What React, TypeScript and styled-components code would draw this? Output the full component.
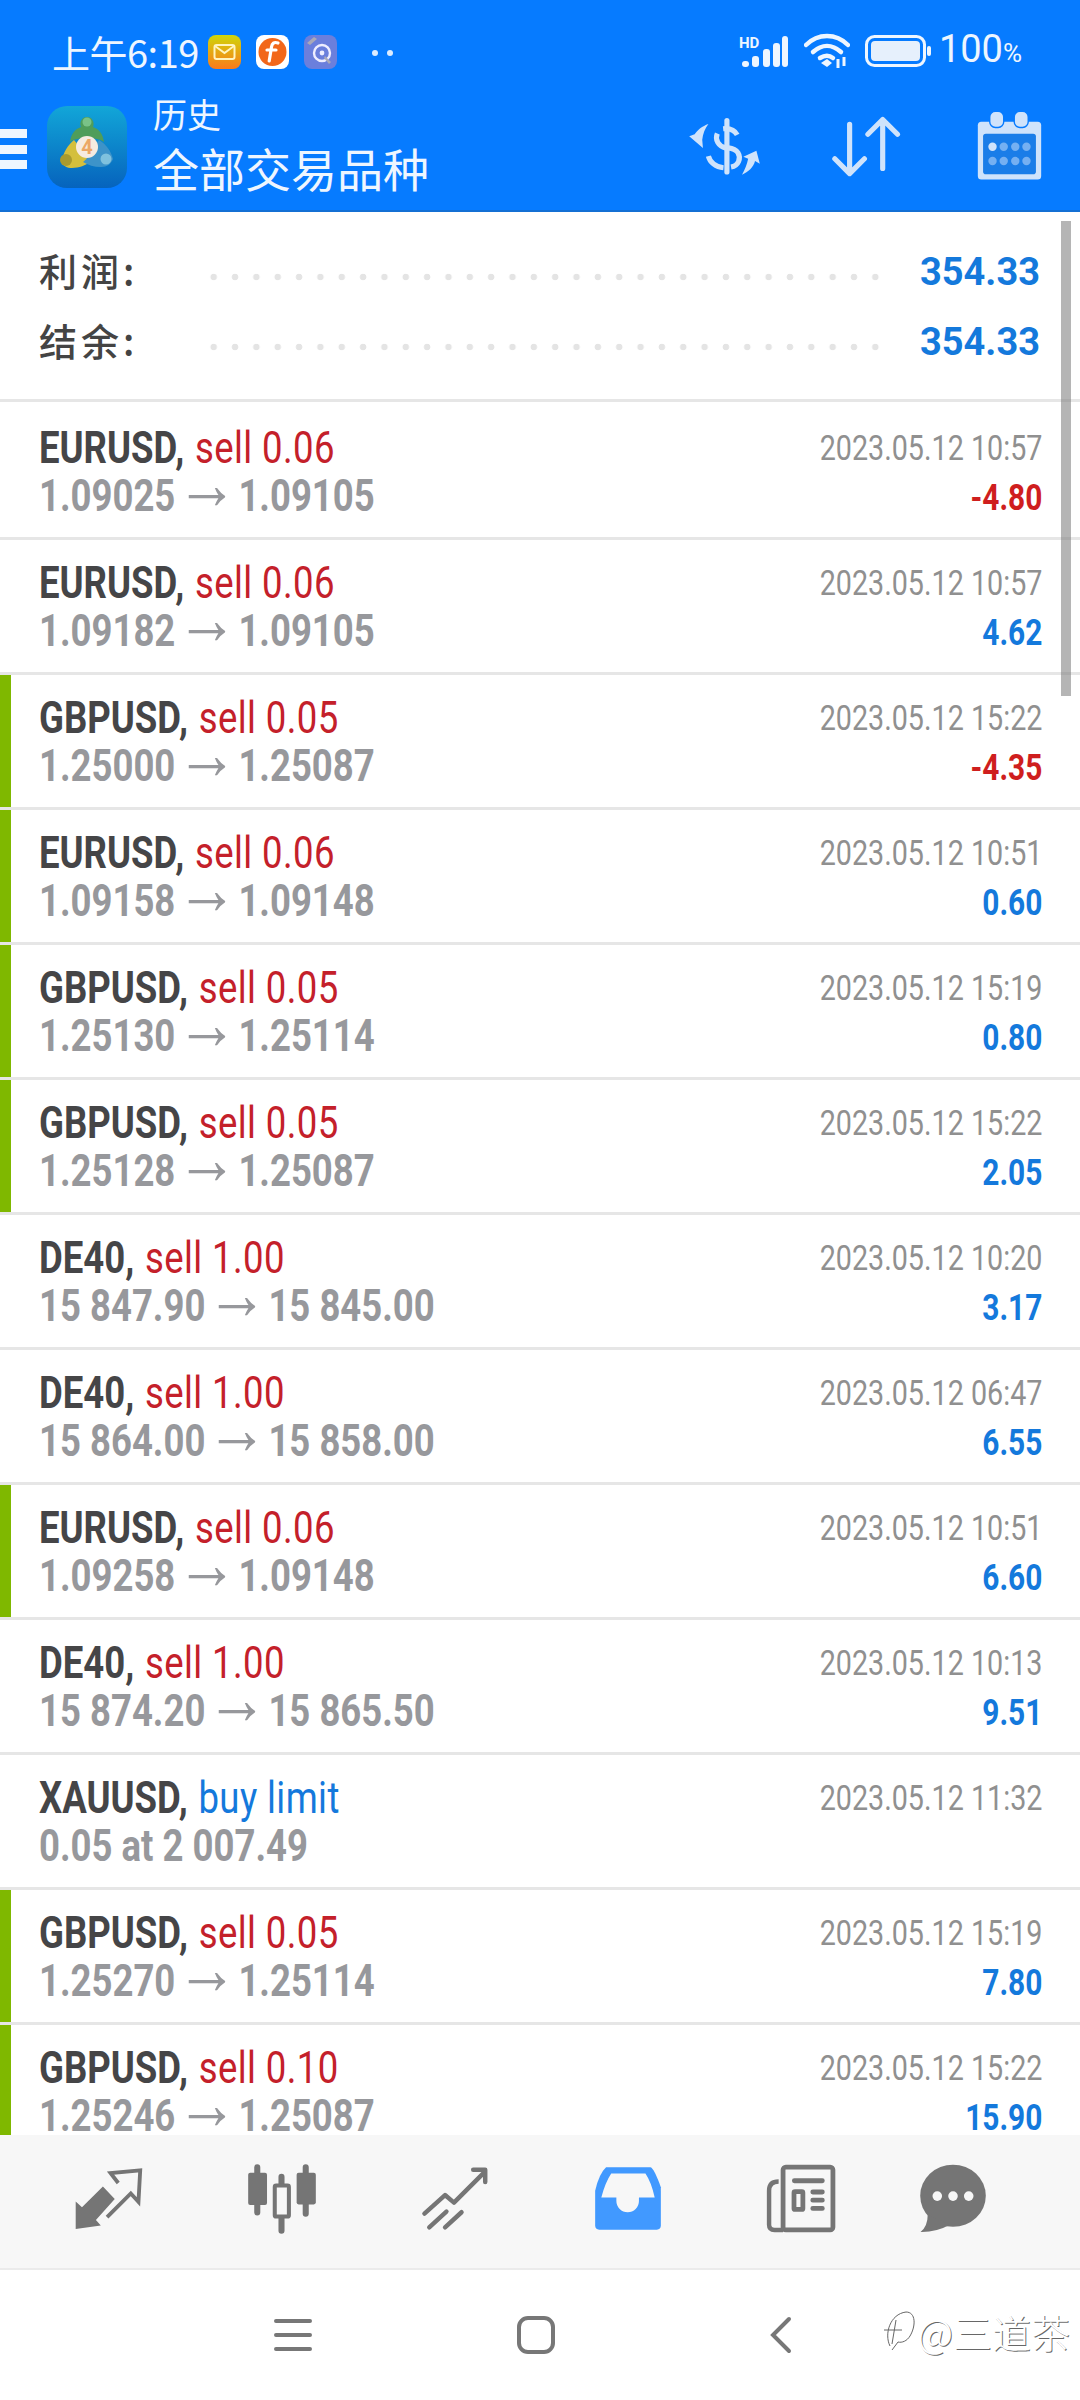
import React from 'react';
import styled, { createGlobalStyle } from 'styled-components';

interface Trade {
  symbol: string;
  side: string;
  open?: string;
  close?: string;
  note?: string;
  time: string;
  profit?: string;
  marked?: boolean;
  pending?: boolean;
}

const trades: Trade[] = [
  { symbol: 'EURUSD', side: 'sell 0.06', open: '1.09025', close: '1.09105', time: '2023.05.12 10:57', profit: '-4.80' },
  { symbol: 'EURUSD', side: 'sell 0.06', open: '1.09182', close: '1.09105', time: '2023.05.12 10:57', profit: '4.62' },
  { symbol: 'GBPUSD', side: 'sell 0.05', open: '1.25000', close: '1.25087', time: '2023.05.12 15:22', profit: '-4.35', marked: true },
  { symbol: 'EURUSD', side: 'sell 0.06', open: '1.09158', close: '1.09148', time: '2023.05.12 10:51', profit: '0.60', marked: true },
  { symbol: 'GBPUSD', side: 'sell 0.05', open: '1.25130', close: '1.25114', time: '2023.05.12 15:19', profit: '0.80', marked: true },
  { symbol: 'GBPUSD', side: 'sell 0.05', open: '1.25128', close: '1.25087', time: '2023.05.12 15:22', profit: '2.05', marked: true },
  { symbol: 'DE40', side: 'sell 1.00', open: '15 847.90', close: '15 845.00', time: '2023.05.12 10:20', profit: '3.17' },
  { symbol: 'DE40', side: 'sell 1.00', open: '15 864.00', close: '15 858.00', time: '2023.05.12 06:47', profit: '6.55' },
  { symbol: 'EURUSD', side: 'sell 0.06', open: '1.09258', close: '1.09148', time: '2023.05.12 10:51', profit: '6.60', marked: true },
  { symbol: 'DE40', side: 'sell 1.00', open: '15 874.20', close: '15 865.50', time: '2023.05.12 10:13', profit: '9.51' },
  { symbol: 'XAUUSD', side: 'buy limit', note: '0.05 at 2 007.49', time: '2023.05.12 11:32', pending: true },
  { symbol: 'GBPUSD', side: 'sell 0.05', open: '1.25270', close: '1.25114', time: '2023.05.12 15:19', profit: '7.80', marked: true },
  { symbol: 'GBPUSD', side: 'sell 0.10', open: '1.25246', close: '1.25087', time: '2023.05.12 15:22', profit: '15.90', marked: true },
];

const GlobalStyle = createGlobalStyle`
  html, body {
    margin: 0;
    padding: 0;
    background: #fff;
  }
  * {
    box-sizing: border-box;
  }
`;

const Page = styled.div`
  position: relative;
  width: 1080px;
  height: 2400px;
  display: flex;
  flex-direction: column;
  overflow: hidden;
  background: #fff;
  font-family: Roboto, 'Noto Sans CJK SC', sans-serif;
`;

const Header = styled.header`
  height: 212px;
  background: #067bff;
  border-bottom: 2px solid #1470d4;
  color: #eef6ff;
  flex: none;
`;

const StatusBar = styled.div`
  height: 92px;
  display: flex;
  align-items: flex-start;
  padding: 33px 58px 0 52px;
`;

const Clock = styled.span`
  font-size: 38px;
  line-height: 38px;
  width: 156px;
  white-space: nowrap;
  font-family: 'Noto Sans CJK SC', sans-serif;
  letter-spacing: -0.5px;
`;

const NoticeIcons = styled.div`
  display: flex;
  gap: 15px;
  margin-top: 2px;
`;

const MoreDots = styled.span`
  display: flex;
  gap: 9px;
  margin: 17px 0 0 35px;
  i {
    width: 6px;
    height: 6px;
    border-radius: 50%;
    background: #dcecff;
  }
`;

const StatusRight = styled.div`
  margin-left: auto;
  display: flex;
  align-items: center;
  height: 36px;
  gap: 15px;
`;

const Percent = styled.span`
  font-size: 38px;
  line-height: 36px;
  margin-left: -7px;
  small {
    font-size: 26px;
  }
`;

const Toolbar = styled.div`
  display: flex;
  align-items: center;
  height: 118px;
  position: relative;
`;

const Burger = styled.div`
  width: 27px;
  height: 40px;
  margin-top: -4px;
  display: flex;
  flex-direction: column;
  justify-content: space-between;
  i {
    height: 9px;
    background: #eef6ff;
  }
`;

const TitleBlock = styled.div`
  margin-left: 26px;
  margin-top: -11px;
  font-family: 'Noto Sans CJK SC', sans-serif;
`;

const Subtitle = styled.div`
  font-size: 34px;
  line-height: 40px;
`;

const Title = styled.div`
  font-size: 46px;
  line-height: 60px;
  margin-top: 3px;
`;

const ToolIcons = styled.div`
  margin-left: auto;
  display: grid;
  grid-template-columns: 145px 145px 65px;
  align-items: center;
  margin-right: 38px;
  margin-top: -10px;
`;

const Summary = styled.section`
  height: 190px;
  flex: none;
  padding: 25px 40px 0 39px;
  border-bottom: 3px solid #e6e6e6;
`;

const SummaryRow = styled.div`
  height: 70px;
  display: flex;
  align-items: center;
`;

const SummaryLabel = styled.span`
  width: 167px;
  margin-top: -6px;
  font-size: 38px;
  font-weight: 500;
  letter-spacing: 4px;
  color: #444;
  font-family: 'Noto Sans CJK SC', sans-serif;
`;

const Dots = styled.span`
  flex: 1;
  align-self: stretch;
  margin-right: 40px;
  background-image: radial-gradient(circle, #e4e4e4 3px, transparent 3.6px);
  background-size: 21.35px 8px;
  background-repeat: repeat-x;
  background-position: -3px 36px;
`;

const SummaryValue = styled.span`
  font-size: 38px;
  font-weight: 700;
  color: #1479dc;
`;

const List = styled.div`
  height: 1733px;
  flex: none;
  overflow: hidden;
`;

const Row = styled.div<{ $marked?: boolean }>`
  height: 135px;
  display: grid;
  grid-template-columns: 1fr auto;
  padding: 19px 38px 0 39px;
  border-bottom: 3px solid #e6e6e6;
  box-shadow: ${({ $marked }) => ($marked ? 'inset 11px 0 0 #7fb800' : 'none')};
  &:first-child {
    height: 138px;
    padding-top: 22px;
  }
`;

const Squeeze = styled.div<{ $right?: boolean }>`
  height: 48px;
  line-height: 48px;
  font-size: 44px;
  white-space: nowrap;
  transform: scaleX(0.83);
  transform-origin: ${({ $right }) => ($right ? 'right' : 'left')} center;
  text-align: ${({ $right }) => ($right ? 'right' : 'left')};
`;

const Symbol = styled.span`
  font-weight: 700;
  color: #454547;
`;

const Side = styled.span<{ $pending?: boolean }>`
  margin-left: 2px;
  letter-spacing: 0.5px;
  color: ${({ $pending }) => ($pending ? '#1479dc' : '#c4202a')};
`;

const Prices = styled.span`
  font-weight: 700;
  color: #97989c;
`;

const Arrow = styled.span`
  font-family: 'Liberation Sans', sans-serif;
  font-size: 74px;
  line-height: 0;
  font-weight: 400;
  margin: 0 1px;
  vertical-align: 2px;
`;

const Time = styled.span`
  font-size: 34.6px;
  color: #909090;
  vertical-align: 3px;
`;

const Profit = styled.span<{ $loss: boolean }>`
  font-size: 36px;
  font-weight: 700;
  color: ${({ $loss }) => ($loss ? '#cf1e1e' : '#1479dc')};
  vertical-align: 1px;
`;

const ScrollThumb = styled.div`
  position: absolute;
  top: 221px;
  right: 9px;
  width: 10px;
  height: 475px;
  background: rgba(120, 120, 120, 0.55);
`;

const TabBar = styled.nav`
  height: 135px;
  flex: none;
  display: grid;
  grid-template-columns: repeat(5, 173px) 132px;
  align-items: center;
  justify-items: center;
  padding: 0 0 6px 22px;
  background: #f7f7f7;
  border-bottom: 2px solid #ebebeb;
`;

const SystemNav = styled.div`
  flex: 1;
  display: grid;
  grid-template-columns: 243px 253px auto;
  align-items: center;
  padding: 0 0 0 274px;
  color: #777;
`;

const Watermark = styled.div`
  position: absolute;
  right: 10px;
  bottom: 42px;
  display: flex;
  align-items: center;
  gap: 2px;
  font-size: 39px;
  line-height: 54px;
  font-family: 'Noto Sans CJK SC', sans-serif;
  font-weight: 300;
  color: #fff;
  text-shadow: 1px 1px 0 rgba(0, 0, 0, 0.6);
`;

const LIGHT = '#cfe3fb';
const GREY = '#757575';
const TAB_BG = '#f7f7f7';

const MailIcon = () => (
  <svg width="33" height="34" viewBox="0 0 33 34">
    <defs>
      <linearGradient id="mail" x1="0" y1="0" x2="0" y2="1">
        <stop offset="0" stopColor="#cfd60a" />
        <stop offset="1" stopColor="#fb7a1c" />
      </linearGradient>
    </defs>
    <rect width="33" height="34" rx="8" fill="url(#mail)" />
    <rect x="6.500" y="10" width="20" height="14" rx="2" fill="none" stroke="#fff4c0" strokeWidth="2" />
    <path d="M7 11l9.500 7 9.500-7" fill="none" stroke="#fff4c0" strokeWidth="2" />
  </svg>
);

const FeedIcon = () => (
  <svg width="33" height="34" viewBox="0 0 33 34">
    <rect width="33" height="34" rx="8" fill="#fff" />
    <circle cx="16.500" cy="17" r="14" fill="#f2671a" />
    <path d="M22 8c-4-1.500-6 .5-6.500 4l-2.300 14M11 15h9" fill="none" stroke="#fff" strokeWidth="3.200" strokeLinecap="round" />
  </svg>
);

const RadarIcon = () => (
  <svg width="33" height="34" viewBox="0 0 33 34">
    <rect width="33" height="34" rx="8" fill="#6b7fdc" />
    <circle cx="18" cy="18" r="8" fill="none" stroke="#eef" strokeWidth="2.400" />
    <circle cx="18" cy="18" r="2.400" fill="#eef" />
    <path d="M3 8l7-6 3 2-7 6zM21 21l6 6-2 2-5-6z" fill="#a9a9b8" />
  </svg>
);

const SignalIcon = () => (
  <svg width="50" height="32" viewBox="0 0 50 32">
    <text x="0" y="13" fontSize="15" fontWeight="700" fontFamily="Roboto, sans-serif" fill="#eef6ff">HD</text>
    <rect x="3" y="26" width="7" height="6" rx="3" fill="#eef6ff" />
    <rect x="13" y="21" width="7" height="11" rx="3" fill="#eef6ff" />
    <rect x="24" y="14" width="7" height="18" rx="3" fill="#eef6ff" />
    <rect x="34" y="8" width="7" height="24" rx="3" fill="#eef6ff" />
    <rect x="43" y="1" width="6" height="31" rx="3" fill="#eef6ff" />
  </svg>
);

const WifiIcon = () => (
  <svg width="46" height="36" viewBox="0 0 46 36">
    <g fill="none" stroke="#eef6ff" strokeWidth="4.500" strokeLinecap="round">
      <path d="M2 12C14 0 32 0 44 12" />
      <path d="M9 19c9-8 19-8 28 0" />
      <path d="M16 25c5-3 9-3 13 0" />
    </g>
    <path d="M17 30l6-4 5 4-5 4z" fill="#eef6ff" />
    <path d="M34 26v9M40 24v9" stroke="#eef6ff" strokeWidth="3" />
  </svg>
);

const BatteryIcon = () => (
  <svg width="66" height="32" viewBox="0 0 66 32">
    <rect x="1.500" y="1.500" width="58" height="29" rx="8" fill="none" stroke="#eef6ff" strokeWidth="3" />
    <rect x="6" y="6" width="49" height="20" rx="4" fill="#e6f0fc" />
    <rect x="62" y="11" width="4" height="10" rx="2" fill="#eef6ff" />
  </svg>
);

const AppLogo = () => (
  <svg width="80" height="82" viewBox="0 0 80 82" style={{ marginLeft: 20, marginTop: -8 }}>
    <defs>
      <linearGradient id="logo" x1="0" y1="0" x2="0" y2="1">
        <stop offset="0" stopColor="#12a6d8" />
        <stop offset="1" stopColor="#0663bd" />
      </linearGradient>
    </defs>
    <rect width="80" height="82" rx="20" fill="url(#logo)" />
    <path d="M23 36c1-8 5-13 11-15-2-5 1-10 6-10s8 5 6 10c6 2 10 7 11 15-4-3-10-4-17-4s-13 1-17 4z" fill="#4f9d5a" />
    <circle cx="40" cy="16" r="4.500" fill="#79c288" />
    <path d="M27 34c-6 5-11 12-12 22 1 4 5 6 10 6 7 0 14-3 18-6l-7-8-4-8z" fill="#d4bf3c" />
    <circle cx="19" cy="54" r="6" fill="#a99a2e" />
    <path d="M52 34c7 4 12 11 14 19-2 5-6 8-12 8-7 0-13-2-18-5l8-7 3-8z" fill="#3d93c9" />
    <circle cx="59" cy="53" r="5.500" fill="#7fc1de" />
    <circle cx="40" cy="41" r="11" fill="#f6ebe0" />
    <text x="40" y="48" fontSize="20" fontWeight="700" fontFamily="Roboto, sans-serif" textAnchor="middle" fill="#eca765">4</text>
  </svg>
);

const DollarIcon = () => (
  <svg width="74" height="60" viewBox="420 345 215 175" fill="none">
    <path d="M536 358V508" stroke={LIGHT} strokeWidth="15" strokeLinecap="round" />
    <path d="M566 400C558 385 545 380 525 382M508 396c-8 18 4 38 24 42" stroke={LIGHT} strokeWidth="15" />
    <path d="M482 462c4 18 22 32 44 34M548 494c22-4 30-26 20-42-4-6-12-12-28-14" stroke={LIGHT} strokeWidth="15" />
    <path d="M482 368c-18 6-32 18-40 30l-16 6 40 34-2-24c2-18 8-32 18-46z" fill={LIGHT} />
    <path d="M580 516c18-8 34-22 38-40l14 8-10-38-38 18 14 6c-4 18-10 32-18 46z" fill={LIGHT} />
  </svg>
);

const SortIcon = () => (
  <svg width="69" height="62" viewBox="845 345 200 180" fill="none" stroke={LIGHT} strokeWidth="15" strokeLinecap="round" strokeLinejoin="round">
    <path d="M896 372V514M853 472l43 43 43-43" />
    <path d="M992 500V358M949 401l43-43 43 43" />
  </svg>
);

const CalendarIcon = () => (
  <svg width="65" height="70" viewBox="1268 335 185 200">
    <rect x="1270" y="366" width="181" height="165" rx="10" fill={LIGHT} />
    <rect x="1285" y="400" width="151" height="116" rx="8" fill="#1a7de8" />
    <rect x="1304" y="336" width="40" height="46" rx="16" fill={LIGHT} stroke="#067bff" strokeWidth="4" />
    <rect x="1374" y="336" width="40" height="46" rx="16" fill={LIGHT} stroke="#067bff" strokeWidth="4" />
    {[1312, 1344, 1377, 1409].map((x, i) => (
      <React.Fragment key={x}>
        <circle cx={x} cy="437" r="12" fill={LIGHT} opacity={i === 0 ? 1 : 0.5} />
        <circle cx={x} cy="478" r="12" fill={LIGHT} opacity="0.5" />
      </React.Fragment>
    ))}
  </svg>
);

const TradeTabIcon = () => (
  <svg width="68" height="62" viewBox="218 250 195 176" fill="none">
    <path d="M220 345l18 17 60-60 34 36-54 60 14 16-72 10z" fill={GREY} />
    <path d="M342 292l-22-28 85-8-5 90-22-24-68 68" stroke={GREY} strokeWidth="11" />
  </svg>
);

const CandleTabIcon = () => (
  <svg width="72" height="70" viewBox="710 232 213 208" fill="none">
    <path d="M743 242V376M887 242V380M815 270V430" stroke={GREY} strokeWidth="18" strokeLinecap="round" />
    <rect x="716" y="258" width="56" height="96" rx="6" fill={GREY} />
    <rect x="860" y="258" width="57" height="94" rx="6" fill={GREY} />
    <rect x="795" y="296" width="42" height="92" rx="4" fill={TAB_BG} stroke={GREY} strokeWidth="12" />
  </svg>
);

const ChartTabIcon = () => (
  <svg width="68" height="65" viewBox="1220 238 198 188" fill="none" stroke={GREY} strokeWidth="13" strokeLinecap="round" strokeLinejoin="round">
    <path d="M1230 376l60-54 26 22 86-86" />
    <path d="M1372 248h35v36" />
    <path d="M1244 416l50-46M1290 416l48-44" />
  </svg>
);

const InboxTabIcon = () => (
  <svg width="68" height="65" viewBox="155 238 198 190">
    <path d="M190 242H320Q330 245 350 300V412Q350 424 338 424H170Q158 424 158 412V310Q170 260 190 242Z" fill="#4199ff" />
    <path d="M205 260H305Q322 285 332 330H286V340A33 33 0 0 1 220 340V330H176Q188 285 205 260Z" fill={TAB_BG} />
  </svg>
);

const NewsTabIcon = () => (
  <svg width="70" height="69" viewBox="655 232 205 202" fill="none" stroke={GREY}>
    <rect x="705" y="241" width="146" height="184" rx="8" strokeWidth="14" />
    <path d="M692 283Q664 283 664 310V410Q664 425 680 425H705" strokeWidth="13" />
    <path d="M738 281H820M792 314H820M792 338H820M792 362H820" strokeWidth="14" strokeLinecap="round" />
    <rect x="737" y="313" width="26" height="52" rx="3" strokeWidth="14" />
  </svg>
);

const ChatTabIcon = () => (
  <svg width="68" height="69" viewBox="1100 232 198 202">
    <ellipse cx="1199" cy="325" rx="96" ry="91" fill={GREY} />
    <path d="M1125 380Q1125 415 1104 431Q1150 432 1190 410Z" fill={GREY} />
    <circle cx="1153" cy="326" r="14" fill={TAB_BG} />
    <circle cx="1199" cy="326" r="14" fill={TAB_BG} />
    <circle cx="1245" cy="326" r="14" fill={TAB_BG} />
  </svg>
);

const MenuKey = () => (
  <svg width="38" height="34" viewBox="0 0 38 34" fill="none" stroke="currentColor" strokeWidth="4" strokeLinecap="round">
    <path d="M2 3h34M2 17h34M2 31h34" />
  </svg>
);

const HomeKey = () => (
  <svg width="38" height="38" viewBox="0 0 38 38" fill="none" stroke="currentColor" strokeWidth="4">
    <rect x="2" y="2" width="34" height="34" rx="9" />
  </svg>
);

const BackKey = () => (
  <svg width="22" height="38" viewBox="0 0 22 38" fill="none" stroke="currentColor" strokeWidth="4" strokeLinecap="round">
    <path d="M19 3L3 19l16 16" />
  </svg>
);

const ZhihuMark = () => (
  <svg width="34" height="42" viewBox="0 0 34 42" fill="none" stroke="#666" strokeWidth="1">
    <path d="M8 36C2 24 8 4 24 2c10 0 10 14 4 24-3 5-8 7-12 6l-6 8" />
    <path d="M2 20h18M14 10l-4 24" />
  </svg>
);

const TradeRow = ({ trade }: { trade: Trade }) => {
  const { symbol, side, open, close, note, time, profit, marked, pending } = trade;
  return (
    <Row $marked={marked}>
      <div>
        <Squeeze>
          <Symbol>{symbol},</Symbol> <Side $pending={pending}>{side}</Side>
        </Squeeze>
        <Squeeze>
          {note ? (
            <Prices>{note}</Prices>
          ) : (
            <Prices>
              {open}
              <Arrow>→</Arrow>
              {close}
            </Prices>
          )}
        </Squeeze>
      </div>
      <div>
        <Squeeze $right>
          <Time>{time}</Time>
        </Squeeze>
        {profit && (
          <Squeeze $right>
            <Profit $loss={profit.startsWith('-')}>{profit}</Profit>
          </Squeeze>
        )}
      </div>
    </Row>
  );
};

export default function App() {
  return (
    <Page>
      <GlobalStyle />
      <Header>
        <StatusBar>
          <Clock>上午6:19</Clock>
          <NoticeIcons>
            <MailIcon />
            <FeedIcon />
            <RadarIcon />
          </NoticeIcons>
          <MoreDots>
            <i />
            <i />
          </MoreDots>
          <StatusRight>
            <SignalIcon />
            <WifiIcon />
            <BatteryIcon />
            <Percent>
              100<small>%</small>
            </Percent>
          </StatusRight>
        </StatusBar>
        <Toolbar>
          <Burger>
            <i />
            <i />
            <i />
          </Burger>
          <AppLogo />
          <TitleBlock>
            <Subtitle>历史</Subtitle>
            <Title>全部交易品种</Title>
          </TitleBlock>
          <ToolIcons>
            <DollarIcon />
            <SortIcon />
            <CalendarIcon />
          </ToolIcons>
        </Toolbar>
      </Header>
      <Summary>
        <SummaryRow>
          <SummaryLabel>利润:</SummaryLabel>
          <Dots />
          <SummaryValue>354.33</SummaryValue>
        </SummaryRow>
        <SummaryRow>
          <SummaryLabel>结余:</SummaryLabel>
          <Dots />
          <SummaryValue>354.33</SummaryValue>
        </SummaryRow>
      </Summary>
      <List>
        {trades.map((trade) => (
          <TradeRow key={`${trade.symbol}-${trade.open ?? trade.note}`} trade={trade} />
        ))}
      </List>
      <ScrollThumb />
      <TabBar>
        <TradeTabIcon />
        <CandleTabIcon />
        <ChartTabIcon />
        <InboxTabIcon />
        <NewsTabIcon />
        <ChatTabIcon />
      </TabBar>
      <SystemNav>
        <MenuKey />
        <HomeKey />
        <BackKey />
      </SystemNav>
      <Watermark>
        <ZhihuMark />
        @三道茶
      </Watermark>
    </Page>
  );
}
